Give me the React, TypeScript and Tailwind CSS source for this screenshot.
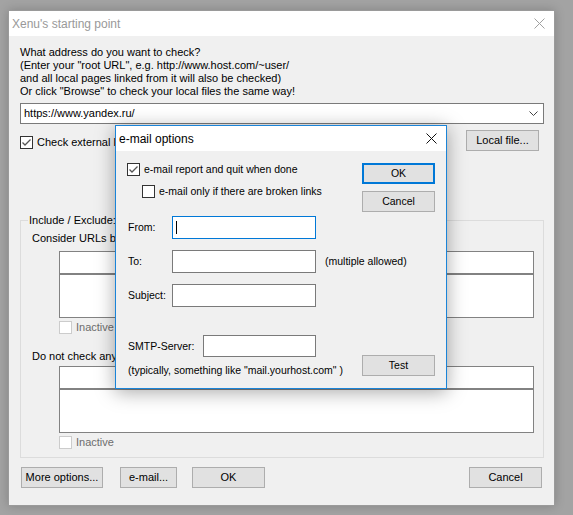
import React from "react";

function CloseX({ color, size = 10 }: { color: string; size?: number }) {
  return (
    <svg width={size + 1} height={size + 1} viewBox="0 0 11 11" className="block">
      <line x1="0.5" y1="0.5" x2="10.5" y2="10.5" stroke={color} strokeWidth="1" />
      <line x1="10.5" y1="0.5" x2="0.5" y2="10.5" stroke={color} strokeWidth="1" />
    </svg>
  );
}

function CheckBox({ checked, disabled }: { checked?: boolean; disabled?: boolean }) {
  return (
    <div
      className={
        disabled
          ? "w-[13px] h-[13px] shrink-0 border border-[#cccccc] bg-white"
          : "w-[13px] h-[13px] shrink-0 border border-[#333333] bg-white flex items-center justify-center"
      }
    >
      {checked && (
        <svg width="11" height="11" viewBox="0 0 11 11" className="block">
          <polyline points="1.5,5.5 4,8 9.5,2.5" fill="none" stroke="#555555" strokeWidth="1.3" />
        </svg>
      )}
    </div>
  );
}

function Btn({ children, w, className = "" }: { children: React.ReactNode; w: string; className?: string }) {
  return (
    <div
      className={`${w} h-[21px] shrink-0 bg-[#e1e1e1] border border-[#adadad] flex items-center justify-center whitespace-nowrap ${className}`}
    >
      {children}
    </div>
  );
}

function ListPair() {
  return (
    <div className="flex flex-col">
      <div className="h-[23px] bg-white border border-[#828282]" />
      <div className="h-[44px] bg-white border border-[#828282]" />
    </div>
  );
}

function MainWindow() {
  return (
    <div className="w-[547px] h-[496px] bg-[#f0f0f0] border border-[#9a9a9a] shadow-[0_0_10px_rgba(0,0,0,0.2)] flex flex-col">
      <div className="h-[25px] shrink-0 bg-white flex items-center justify-between pl-[3px] pr-[9px]">
        <span className="text-[12px] leading-[14px] text-[#999999]">Xenu's starting point</span>
        <CloseX color="#a0a0a0" />
      </div>
      <div className="flex flex-col pl-[11px] pr-[10px] pt-[10px]">
        <div className="flex flex-col">
          <span>What address do you want to check?</span>
          <span>(Enter your "root URL", e.g. http://www.host.com/~user/</span>
          <span>and all local pages linked from it will also be checked)</span>
          <span>Or click "Browse" to check your local files the same way!</span>
        </div>
        <div className="mt-[5px] h-[21px] bg-white border border-[#7a7a7a] flex items-center justify-between pl-[3px] pr-[5px]">
          <span>https://www.yandex.ru/</span>
          <svg width="9" height="5" viewBox="0 0 9 5" className="block">
            <polyline points="0.5,0.5 4.5,4.5 8.5,0.5" fill="none" stroke="#444444" strokeWidth="1" />
          </svg>
        </div>
        <div className="mt-[6px] flex items-start">
          <div className="mt-[6px] flex items-center">
            <CheckBox checked />
            <span className="ml-[4px]">Check external links</span>
          </div>
          <Btn w="w-[73px]" className="ml-auto mr-[5px]">Local file...</Btn>
        </div>
        <fieldset className="mt-[63px] h-[244px] border border-[#dcdcdc] flex flex-col pl-[11px] pr-[9px]">
          <legend className="ml-[-4px] px-[1px]">Include / Exclude:</legend>
          <span className="mt-[5px] whitespace-nowrap">Consider URLs beginning with this as 'internal':</span>
          <div className="mt-[6px] ml-[27px]">
            <ListPair />
            <div className="mt-[3px] flex items-center">
              <CheckBox disabled />
              <span className="ml-[4px] text-[#6d6d6d]">Inactive</span>
            </div>
          </div>
          <span className="mt-[16px] whitespace-nowrap">Do not check any URLs beginning with this:</span>
          <div className="mt-[3px] ml-[27px]">
            <ListPair />
            <div className="mt-[3px] flex items-center">
              <CheckBox disabled />
              <span className="ml-[4px] text-[#6d6d6d]">Inactive</span>
            </div>
          </div>
        </fieldset>
        <div className="mt-[9px] flex items-center pl-[1px] pr-[2px]">
          <Btn w="w-[82px]">More options...</Btn>
          <Btn w="w-[57px]" className="ml-[17px]">e-mail...</Btn>
          <Btn w="w-[73px]" className="ml-[15px]">OK</Btn>
          <Btn w="w-[73px]" className="ml-auto">Cancel</Btn>
        </div>
      </div>
    </div>
  );
}

function EmailDialog() {
  return (
    <div className="absolute left-[115px] top-[125px] w-[332px] h-[264px] border border-[#1a84d8] bg-[#f0f0f0] shadow-[0_3px_18px_rgba(0,0,0,0.35)] flex flex-col text-[10.5px]">
      <div className="h-[25px] shrink-0 bg-white flex items-center justify-between pl-[3px] pr-[9px]">
        <span className="text-[12px] leading-[14px]">e-mail options</span>
        <CloseX color="#111111" />
      </div>
      <div className="flex pl-[11px] pr-[11px] pt-[12px]">
        <div className="w-[235px] shrink-0 flex flex-col whitespace-nowrap">
          <div className="h-[13px] flex items-center">
            <CheckBox checked />
            <span className="ml-[4px]">e-mail report and quit when done</span>
          </div>
          <div className="mt-[9px] h-[13px] flex items-center pl-[15px]">
            <CheckBox />
            <span className="ml-[4px]">e-mail only if there are broken links</span>
          </div>
          <div className="mt-[18px] flex items-center">
            <span className="w-[45px] shrink-0 pl-[1px]">From:</span>
            <div className="w-[144px] h-[23px] shrink-0 bg-white border border-[#0078d7] flex items-center pl-[3px]">
              <div className="w-[1px] h-[13px] bg-black" />
            </div>
          </div>
          <div className="mt-[11px] flex items-center">
            <span className="w-[45px] shrink-0 pl-[1px]">To:</span>
            <div className="w-[144px] h-[23px] shrink-0 bg-white border border-[#7a7a7a]" />
            <span className="ml-[9px]">(multiple allowed)</span>
          </div>
          <div className="mt-[11px] flex items-center">
            <span className="w-[45px] shrink-0 pl-[1px]">Subject:</span>
            <div className="w-[144px] h-[23px] shrink-0 bg-white border border-[#7a7a7a]" />
          </div>
          <div className="mt-[28px] flex items-center">
            <span className="w-[76px] shrink-0 pl-[1px]">SMTP-Server:</span>
            <div className="w-[113px] h-[22px] shrink-0 bg-white border border-[#7a7a7a]" />
          </div>
          <span className="mt-[7px] pl-[1px]">(typically, something like "mail.yourhost.com" )</span>
        </div>
        <div className="w-[73px] shrink-0 flex flex-col">
          <div className="h-[21px] bg-[#e1e1e1] border-2 border-[#0078d7] flex items-center justify-center">OK</div>
          <Btn w="w-[73px]" className="mt-[7px]">Cancel</Btn>
          <Btn w="w-[73px]" className="mt-[143px]">Test</Btn>
        </div>
      </div>
    </div>
  );
}

export default function App() {
  return (
    <div className="relative w-[573px] h-[515px] overflow-hidden bg-[#a3a3a3] pl-[8px] pt-[10px] font-['Liberation_Sans',Arial,sans-serif] text-[11px] leading-[13px] text-black">
      <MainWindow />
      <EmailDialog />
    </div>
  );
}
